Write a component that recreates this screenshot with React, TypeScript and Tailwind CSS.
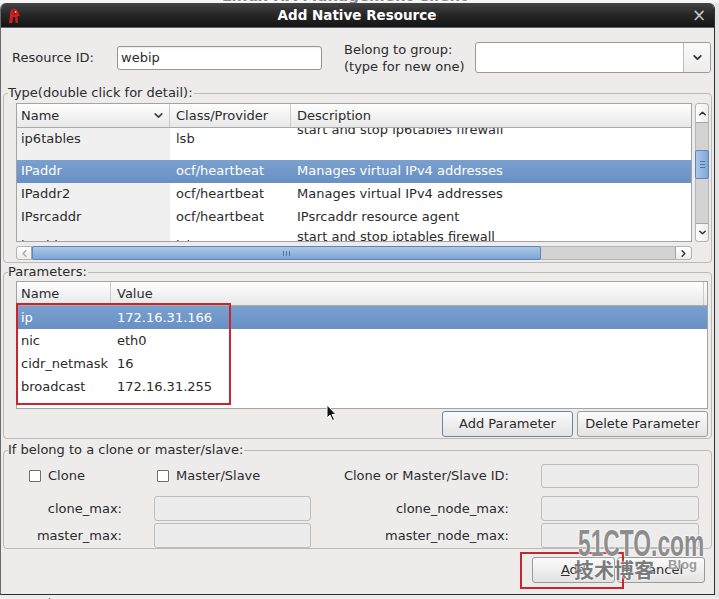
import React from "react";

type Dir = "up" | "down" | "left" | "right";
const Chev = ({ dir, size = 10, color = "#333", w = 1.6 }: { dir: Dir; size?: number; color?: string; w?: number }) => {
  const pts = { up: "2,6.5 5,3.5 8,6.5", down: "2,3.5 5,6.5 8,3.5", left: "6.5,2 3.5,5 6.5,8", right: "3.5,2 6.5,5 3.5,8" }[dir];
  return (
    <svg width={size} height={size} viewBox="0 0 10 10">
      <polyline points={pts} fill="none" stroke={color} strokeWidth={w} strokeLinecap="round" strokeLinejoin="round" />
    </svg>
  );
};

const typeRows = [
  { name: "ip6tables", cls: "lsb", desc: "start and stop ip6tables firewall", tall: true },
  { name: "IPaddr", cls: "ocf/heartbeat", desc: "Manages virtual IPv4 addresses", sel: true },
  { name: "IPaddr2", cls: "ocf/heartbeat", desc: "Manages virtual IPv4 addresses" },
  { name: "IPsrcaddr", cls: "ocf/heartbeat", desc: "IPsrcaddr resource agent" },
  { name: "iptables", cls: "lsb", desc: "start and stop iptables firewall", tall: true },
];

const params = [
  { n: "ip", v: "172.16.31.166", sel: true },
  { n: "nic", v: "eth0" },
  { n: "cidr_netmask", v: "16" },
  { n: "broadcast", v: "172.16.31.255" },
];

const Btn = ({ children, className = "" }: { children: React.ReactNode; className?: string }) => (
  <div
    className={
      "h-[26px] flex items-center justify-center rounded-[3px] border border-[#9a9a9a] bg-gradient-to-b from-[#fbfbfb] to-[#e3e3e3] " +
      className
    }
  >
    {children}
  </div>
);

const Disabled = ({ w }: { w: string }) => (
  <div className={w + " h-[25px] rounded-[3px] border border-[#bdbdbd] bg-[#ececec]"} />
);

const Check = ({ label }: { label: string }) => (
  <div className="flex items-center gap-[7px]">
    <div className="w-[12px] h-[12px] border border-[#6f6f6f] bg-white rounded-[1px]" />
    <span>{label}</span>
  </div>
);

export default function App() {
  return (
    <div className="relative w-[719px] h-[599px] overflow-hidden bg-[#ececec] font-['DejaVu_Sans','Liberation_Sans',sans-serif] text-[13px] text-[#2b2b2b]">
      {/* background window top */}
      <div className="h-[3px] overflow-hidden bg-[#f6f6f6] pl-[222px]">
        <div className="-mt-[12px] leading-[16px] text-[15px] font-bold text-[#8a8a8a] whitespace-nowrap">
          Linux HA Management Client
        </div>
      </div>

      <div className="flex">
        {/* dialog */}
        <div className="w-[715px] h-[592px] flex flex-col rounded-t-[6px] overflow-hidden border-x border-b border-l-[#6a6a6a] border-r-[#2e2e2e] border-b-[#2e2e2e] bg-[#edeceb]">
          {/* title bar */}
          <div className="h-[25px] shrink-0 flex items-center bg-gradient-to-b from-[#444] via-[#262626] to-[#151515] border-b border-[#5a6470] px-[5px]">
            <svg width="15" height="17" viewBox="0 0 15 17">
              <path d="M3 16 L4 7 Q4 2 8 1.5 Q12 2 12.5 6 L14 9 L11.5 9 L12 16 L9.5 16 L9 10 L7 10 L6.5 16 Z" fill="#c8211f" />
              <path d="M7 3 Q10 3 10.5 6 L8.5 8 Z" fill="#6e0f0f" />
              <circle cx="9.5" cy="5" r="0.9" fill="#f3d2d2" />
            </svg>
            <div className="flex-1 text-center text-white font-bold text-[13.5px] leading-[16px] pl-[2px]">
              Add Native Resource
            </div>
            <div className="w-[16px] text-center text-[#c8c8c8] text-[17px] leading-[16px] mr-[2px]">×</div>
          </div>

          {/* body */}
          <div className="flex-1 flex flex-col">
            {/* row 1 */}
            <div className="mt-[14px] h-[31px] flex items-center pl-[11px]">
              <div className="w-[105px]">Resource ID:</div>
              <div className="w-[205px] h-[24px] rounded-[3px] border border-[#959595] bg-white flex items-center pl-[3px] shadow-[inset_0_1px_1px_rgba(0,0,0,0.08)]">
                webip
              </div>
              <div className="ml-[22px] w-[131px] leading-[17px]">
                <div>Belong to group:</div>
                <div>(type for new one)</div>
              </div>
              <div className="w-[236px] h-[31px] rounded-[3px] border border-[#9a9a9a] bg-white flex">
                <div className="flex-1" />
                <div className="w-[27px] border-l border-[#bdbdbd] bg-gradient-to-b from-[#fafafa] to-[#ececec] rounded-r-[3px] flex items-center justify-center">
                  <Chev dir="down" size={11} />
                </div>
              </div>
            </div>

            {/* Type fieldset */}
            <fieldset className="mt-[12px] mx-[2px] border border-[#bcbab7] rounded-[4px]">
              <legend className="ml-[4px] pr-[1px] leading-[16px]">Type(double click for detail):</legend>
              <div className="pl-[12px] pr-[2px] pt-[2px] pb-[2px]">
                <div className="flex h-[139px]">
                  <div className="w-[676px] h-[139px] border border-[#a3a3a3] bg-white flex flex-col">
                    <div className="h-[24px] shrink-0 flex border-b border-[#aaaaaa] bg-gradient-to-b from-[#fefefe] to-[#e8e8e8]">
                      <div className="w-[153px] flex items-center justify-between pl-[4px] pr-[5px] border-r border-[#cbcbcb]">
                        <span>Name</span>
                        <Chev dir="down" size={11} color="#444" />
                      </div>
                      <div className="w-[121px] flex items-center pl-[6px] border-r border-[#cbcbcb]">Class/Provider</div>
                      <div className="flex-1 flex items-center pl-[6px]">Description</div>
                    </div>
                    <div className="flex-1 overflow-hidden">
                      <div className="-mt-[6px]">
                        {typeRows.map((r) => (
                          <div
                            key={r.name}
                            className={
                              "flex " +
                              (r.tall ? "h-[38px] " : "h-[23px] ") +
                              (r.sel ? "bg-gradient-to-b from-[#7aa0cf] to-[#6890c4] text-white" : "")
                            }
                          >
                            <div
                              className={
                                "w-[153px] pl-[4px] leading-[16px] " +
                                (r.tall ? "pt-[9px] " : "pt-[3px] ") +
                                (r.sel ? "" : "bg-[#f0f0f0]")
                              }
                            >
                              {r.name}
                            </div>
                            <div className={"w-[121px] pl-[6px] leading-[16px] " + (r.tall ? "pt-[9px]" : "pt-[3px]")}>
                              {r.cls}
                            </div>
                            <div className={"flex-1 pl-[6px] leading-[16px] " + (r.tall ? "pt-0" : "pt-[3px]")}>
                              {r.desc}
                            </div>
                          </div>
                        ))}
                      </div>
                    </div>
                  </div>
                  {/* vertical scrollbar */}
                  <div className="ml-[3px] w-[14px] h-[139px] rounded-[3px] bg-[#d3d3d3] border border-[#b4b4b4] flex flex-col">
                    <div className="h-[19px] rounded-t-[3px] border-b border-[#a5a5a5] bg-gradient-to-r from-[#ffffff] to-[#ececec] flex items-center justify-center">
                      <Chev dir="up" size={9} />
                    </div>
                    <div className="h-[27px]" />
                    <div className="h-[29px] mx-[-1px] rounded-[2px] border border-[#5c86bb] bg-gradient-to-r from-[#a9c5e8] to-[#82a8d6] flex items-center justify-center">
                      <div className="flex flex-col gap-[2px]">
                        <div className="w-[5px] h-[1px] bg-[#4d75a8]" />
                        <div className="w-[5px] h-[1px] bg-[#4d75a8]" />
                        <div className="w-[5px] h-[1px] bg-[#4d75a8]" />
                      </div>
                    </div>
                    <div className="flex-1" />
                    <div className="h-[18px] rounded-b-[3px] border-t border-[#a5a5a5] bg-gradient-to-r from-[#ffffff] to-[#ececec] flex items-center justify-center">
                      <Chev dir="down" size={9} />
                    </div>
                  </div>
                </div>
                {/* horizontal scrollbar */}
                <div className="mt-[4px] w-[676px] h-[14px] rounded-[3px] border border-[#b4b4b4] bg-[#d3d3d3] flex">
                  <div className="w-[15px] rounded-l-[3px] border-r border-[#a5a5a5] bg-gradient-to-b from-white to-[#ececec] flex items-center justify-center">
                    <Chev dir="left" size={9} color="#aaa" />
                  </div>
                  <div className="w-[509px] -my-[1px] rounded-[2px] border border-[#5c86bb] bg-gradient-to-b from-[#acc8ea] to-[#7ea5d4] flex items-center justify-center">
                    <div className="flex gap-[2px]">
                      <div className="w-[1px] h-[5px] bg-[#4d75a8]" />
                      <div className="w-[1px] h-[5px] bg-[#4d75a8]" />
                      <div className="w-[1px] h-[5px] bg-[#4d75a8]" />
                    </div>
                  </div>
                  <div className="flex-1" />
                  <div className="w-[16px] rounded-r-[3px] border-l border-[#a5a5a5] bg-gradient-to-b from-white to-[#ececec] flex items-center justify-center">
                    <Chev dir="right" size={9} />
                  </div>
                </div>
              </div>
            </fieldset>

            {/* Parameters fieldset */}
            <fieldset className="mt-[1px] mx-[2px] border border-[#bcbab7] rounded-[4px]">
              <legend className="ml-[4px] pr-[1px] leading-[16px]">Parameters:</legend>
              <div className="pl-[12px] pr-[3px] pt-[1px] pb-[1px]">
                <div className="w-[692px] h-[128px] border border-[#a3a3a3] bg-white flex flex-col">
                  <div className="h-[24px] shrink-0 flex border-b border-[#aaaaaa] bg-gradient-to-b from-[#fefefe] to-[#e8e8e8]">
                    <div className="w-[94px] flex items-center pl-[4px] border-r border-[#cbcbcb]">Name</div>
                    <div className="flex-1 flex items-center pl-[6px] border-r border-[#cbcbcb] mr-[3px]">Value</div>
                  </div>
                  {params.map((p) => (
                    <div
                      key={p.n}
                      className={
                        "h-[23px] flex items-center " +
                        (p.sel ? "bg-gradient-to-b from-[#7aa0cf] to-[#6890c4] text-white" : "")
                      }
                    >
                      <div className="w-[95px] pl-[4px]">{p.n}</div>
                      <div className="pl-[5px]">{p.v}</div>
                    </div>
                  ))}
                </div>
                <div className="mt-[2px] flex justify-end gap-[4px] pr-0">
                  <Btn className="w-[131px] border-[#71839a] from-[#f6f8fb] to-[#dfe4ea]">Add Parameter</Btn>
                  <Btn className="w-[131px]">Delete Parameter</Btn>
                </div>
              </div>
            </fieldset>

            {/* Clone fieldset */}
            <fieldset className="mt-[3px] mx-[2px] border border-[#bcbab7] rounded-[4px]">
              <legend className="ml-[4px] pr-[1px] leading-[16px]">If belong to a clone or master/slave:</legend>
              <div className="flex flex-col">
                <div className="mt-[6px] h-[24px] flex items-center">
                  <div className="ml-[25px] w-[128px]">
                    <Check label="Clone" />
                  </div>
                  <div className="w-[163px]">
                    <Check label="Master/Slave" />
                  </div>
                  <div className="w-[189px] text-right">Clone or Master/Slave ID:</div>
                  <div className="ml-[32px] w-[158px] h-[24px] rounded-[3px] border border-[#bdbdbd] bg-[#ececec]" />
                </div>
                <div className="mt-[8px] h-[25px] flex items-center">
                  <div className="w-[118px] text-right">clone_max:</div>
                  <div className="ml-[32px]">
                    <Disabled w="w-[157px]" />
                  </div>
                  <div className="w-[198px] text-right">clone_node_max:</div>
                  <div className="ml-[32px]">
                    <Disabled w="w-[158px]" />
                  </div>
                </div>
                <div className="mt-[2px] h-[25px] flex items-center">
                  <div className="w-[118px] text-right">master_max:</div>
                  <div className="ml-[32px]">
                    <Disabled w="w-[157px]" />
                  </div>
                  <div className="w-[198px] text-right">master_node_max:</div>
                  <div className="ml-[32px]">
                    <Disabled w="w-[158px]" />
                  </div>
                </div>
              </div>
            </fieldset>

            {/* bottom buttons */}
            <div className="mt-[8px] flex justify-end gap-[2px] pr-[9px]">
              <Btn className="w-[83px]">
                <span>
                  <span className="underline">A</span>dd
                </span>
              </Btn>
              <Btn className="w-[88px]">Cancel</Btn>
            </div>
          </div>
        </div>
        <div className="flex-1 h-[595px] bg-[#e4e4e4]" />
      </div>

      {/* strip below dialog */}
      <div className="h-[4px] overflow-hidden bg-[#f2f2f2] flex">
        <div className="w-[50px] border-r border-[#555] pl-[30px]">
          <div className="leading-[14px] text-[12px]">k</div>
        </div>
        <div className="pl-[5px] leading-[14px] text-[12px] whitespace-nowrap">lo 127.0.0.1</div>
      </div>

      {/* overlays */}
      <div className="absolute left-[16px] top-[303px] w-[215px] h-[102px] border-2 border-[#c9252c]" />
      <div className="absolute left-[520px] top-[552px] w-[104px] h-[37px] border-2 border-[#c9252c]" />

      {/* mouse cursor */}
      <svg className="absolute left-[326px] top-[404px]" width="12" height="18" viewBox="0 0 12 18">
        <path d="M1 1 L1 14 L4 11 L6.5 16.5 L8.5 15.5 L6 10.5 L10 10.5 Z" fill="#111" stroke="#fff" strokeWidth="1" />
      </svg>

      {/* watermark */}
      <div className="absolute left-[578px] top-[526px] origin-top-left scale-x-[0.76] scale-y-[1.2] text-[30px] leading-[30px] font-bold text-[#8d8d8d] font-['Liberation_Sans',sans-serif] whitespace-nowrap [text-shadow:0_0_2px_#fff,0_0_2px_#fff]">
        51CTO.com
      </div>
      <div className="absolute left-[574px] top-[558px] text-[20px] leading-[24px] font-bold text-[#7b7b7b] font-['Noto_Sans_CJK_SC',sans-serif] [text-shadow:0_0_2px_#fff,0_0_2px_#fff]">
        技术博客
      </div>
      <div className="absolute left-[668px] top-[557px] text-[13px] leading-[16px] font-bold text-[#9a9a9a] font-['Liberation_Sans',sans-serif] [text-shadow:0_0_2px_#fff]">
        Blog
      </div>
    </div>
  );
}
